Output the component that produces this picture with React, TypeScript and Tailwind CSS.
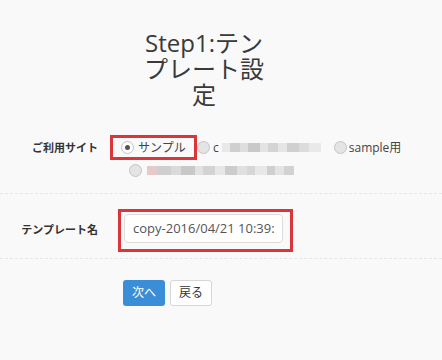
import React from "react";

const font = { fontFamily: '"Open Sans", "Noto Sans CJK JP", sans-serif' };

function Radio({ checked = false }: { checked?: boolean }) {
  return (
    <span
      className={`inline-flex items-center justify-center w-[13px] h-[13px] rounded-full border border-[#c4c4c4] shrink-0 ${
        checked ? "bg-white" : "bg-[#e4e4e4]"
      }`}
    >
      {checked && <span className="w-[5px] h-[5px] rounded-full bg-[#555]" />}
    </span>
  );
}

function Mosaic({ widths }: { widths: [number, string][] }) {
  return (
    <span className="inline-flex items-center h-[10px]">
      {widths.map(([w, c], i) => (
        <span key={i} className="h-[9px] inline-block" style={{ width: w, background: c }} />
      ))}
    </span>
  );
}

export default function App() {
  return (
    <div className="w-[442px] h-[360px] bg-[#f9f9f9] text-[#333] overflow-hidden" style={font}>
      <div className="pt-[30px] pl-[140px]">
        <h1 className="w-[128px] text-center text-[24px] leading-[26px] font-normal text-[#3a3a3a]">
          Step1:テンプレート設定
        </h1>
      </div>

      <div className="flex pt-[27px] pb-[16px] border-b border-dashed border-[#e6e6e6]">
        <div className="w-[98px] shrink-0 text-right text-[11px] font-bold leading-[25px] text-[#333]">
          ご利用サイト
        </div>
        <div className="pl-[12px] flex-1">
          <div className="flex items-center h-[25px]">
            <div className="w-[87px] h-[25px] border-[3px] border-[#d8363b] flex items-center pl-[8px] gap-[4px]">
              <Radio checked />
              <span className="text-[12px] text-[#444]">サンプル</span>
            </div>
            <div className="flex items-center ml-[0px] gap-[3px]">
              <Radio />
              <span className="text-[12px] text-[#444]">c</span>
              <Mosaic
                widths={[
                  [8, "#e8e8e8"],
                  [10, "#cfcfcf"],
                  [8, "#dedede"],
                  [12, "#c9c9c9"],
                  [8, "#e3e3e3"],
                  [10, "#d4d4d4"],
                  [9, "#e6e6e6"],
                  [12, "#d0d0d0"],
                  [10, "#dcdcdc"],
                  [12, "#e9e9e9"],
                ]}
              />
            </div>
            <div className="flex items-center ml-[13px] gap-[2px]">
              <Radio />
              <span className="text-[12px] text-[#444]">sample用</span>
            </div>
          </div>
          <div className="flex items-center h-[14px] mt-[3px] pl-[19px] gap-[5px]">
            <Radio />
            <Mosaic
              widths={[
                [10, "#e6c9c9"],
                [14, "#cfcfcf"],
                [10, "#dadada"],
                [14, "#c8c8c8"],
                [8, "#e2e2e2"],
                [12, "#d3d3d3"],
                [10, "#e7e7e7"],
                [12, "#cccccc"],
                [10, "#e0e0e0"],
                [8, "#d6d6d6"],
                [12, "#e8e8e8"],
                [8, "#cfcfcf"],
                [9, "#e4e4e4"],
                [10, "#d2d2d2"],
              ]}
            />
          </div>
        </div>
      </div>

      <div className="flex items-center pt-[15px] pb-[6px] border-b border-dashed border-[#e6e6e6]">
        <div className="w-[98px] shrink-0 text-right text-[11px] font-bold text-[#333]">
          テンプレート名
        </div>
        <div className="pl-[20px]">
          <div className="w-[175px] h-[43px] border-[3px] border-[#d8363b] pl-[3px] pt-[2px]">
            <div className="w-[159px] h-[29px] bg-white border border-[#dcdcdc] rounded-[4px] overflow-hidden flex items-center pl-[8px] whitespace-nowrap text-[13px] text-[#555]">
              copy-2016/04/21 10:39:
            </div>
          </div>
        </div>
      </div>

      <div className="flex pl-[123px] pt-[21px] gap-[5px]">
        <button className="w-[42px] h-[26px] rounded-[3px] bg-[#3a8ed8] text-white text-[12px]">
          次へ
        </button>
        <button className="w-[42px] h-[26px] rounded-[3px] bg-white border border-[#d6d6d6] text-[#333] text-[12px]">
          戻る
        </button>
      </div>
    </div>
  );
}
